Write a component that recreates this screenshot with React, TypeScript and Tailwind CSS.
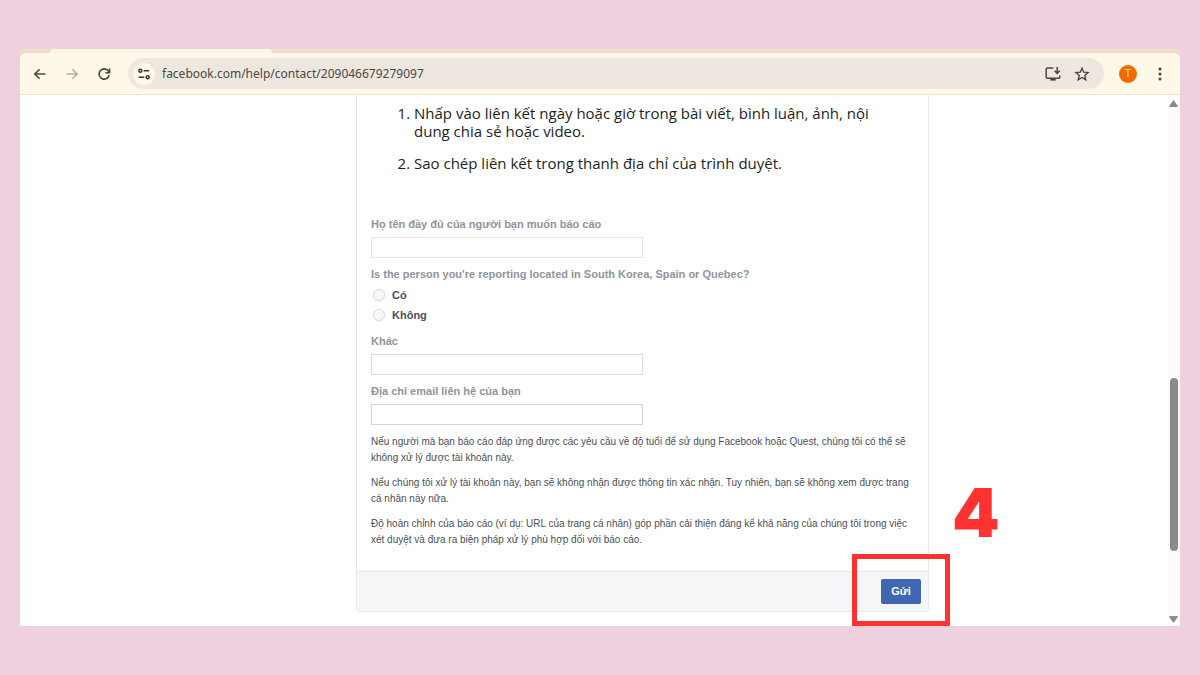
import type { ReactNode } from "react"

const InstallIcon = () => (
  <svg className="w-4 h-4" viewBox="0 0 16 16" fill="none" stroke="#4a463f" strokeWidth="1.5">
    <path d="M8.3 2H2.4C1.7 2 1.2 2.5 1.2 3.2V11c0 .7.5 1.2 1.2 1.2h11.2c.7 0 1.2-.5 1.2-1.2V9.6" />
    <path d="M12.2 1v6M9.6 4.8l2.6 2.6 2.6-2.6" />
    <path d="M5.3 13.6h5.4" strokeWidth="2" />
  </svg>
)

const TuneIcon = () => (
  <svg className="w-3 h-3" viewBox="0 0 12 12" fill="none" stroke="#3a372f" strokeWidth="1.5">
    <circle cx="2.3" cy="2.8" r="1.5" />
    <path d="M5.6 2.8h5.6M.6 9.2h5.6" />
    <circle cx="9.7" cy="9.2" r="1.5" />
  </svg>
)

const Toolbar = () => {
  return (
    <header>
      <div className="bg-[#ecdfc9] rounded-t-sm">
        <div className="h-1 w-[222px] ml-[30px] bg-[#fef6e6] rounded-t"></div>
        <div className="h-[42px] bg-[#fef8e8] border-b border-[#efe5cc] rounded-t-md flex items-center px-3">
          <button aria-label="Back" className="w-4 h-4 flex items-center justify-center">
            <svg className="w-4 h-4" viewBox="0 0 16 16" fill="none" stroke="#4b4a37" strokeWidth="1.6">
              <path d="M13.5 8H3M7.6 3.2L2.8 8l4.8 4.8" />
            </svg>
          </button>
          <button aria-label="Forward" className="w-4 h-4 ml-4 flex items-center justify-center">
            <svg className="w-4 h-4" viewBox="0 0 16 16" fill="none" stroke="#b3ae9d" strokeWidth="1.5">
              <path d="M2.5 8H13M8.4 3.2L13.2 8l-4.8 4.8" />
            </svg>
          </button>
          <button aria-label="Reload" className="w-4 h-4 ml-4 flex items-center justify-center">
            <svg className="w-4 h-4" viewBox="0 0 16 16" fill="none" stroke="#4b4a37" strokeWidth="1.6">
              <path d="M13.2 9A5.1 5.1 0 1 1 12 4.6L13.2 6.2" />
              <path d="M13.6 2.4v4.3H9.3" />
            </svg>
          </button>

          <div className="flex-1 ml-4 h-[31px] rounded-full bg-[#ede7df] flex items-center pl-[5px] pr-[14px]">
            <button
              aria-label="Site information"
              className="w-[22px] h-[22px] rounded-full bg-[#fef8ec] flex items-center justify-center"
            >
              <TuneIcon />
            </button>
            <input
              aria-label="Address"
              className="flex-1 min-w-0 ml-[7px] bg-transparent outline-none text-[12px] text-[#4c4842] font-['Noto_Sans',sans-serif]"
              defaultValue="facebook.com/help/contact/209046679279097"
            />
            <button aria-label="Install" className="mr-[13px]">
              <InstallIcon />
            </button>
            <button aria-label="Bookmark">
              <svg className="w-4 h-4" viewBox="0 0 16 16" fill="none" stroke="#4a463f" strokeWidth="1.4">
                <path d="M8 2.2l1.7 4 4.4.4-3.3 2.9 1 4.3L8 11.5l-3.8 2.3 1-4.3-3.3-2.9 4.4-.4z" />
              </svg>
            </button>
          </div>

          <button className="w-[18px] h-[18px] ml-[15px] rounded-full bg-[#ee6c02] text-[#fbd9bd] text-[10px] leading-none font-['Roboto',sans-serif]">
            T
          </button>
          <button aria-label="Menu" className="ml-[15px]">
            <svg className="w-4 h-4" viewBox="0 0 16 16" fill="#45433a">
              <circle cx="8" cy="3" r="1.5" />
              <circle cx="8" cy="8" r="1.5" />
              <circle cx="8" cy="13" r="1.5" />
            </svg>
          </button>
        </div>
      </div>
    </header>
  )
}

type FieldProps = {
  id: string
  label: string
  border: string
}

const Field = ({ id, label, border }: FieldProps) => (
  <div className="flex flex-col">
    <label htmlFor={id} className="text-[11px] leading-4 font-bold text-[#90949c]">
      {label}
    </label>
    <input
      id={id}
      type="text"
      className={`w-[272px] h-[21px] mt-[5px] px-1 text-[11px] bg-white border outline-none ${border}`}
    />
  </div>
)

const Choice = ({ children }: { children: ReactNode }) => (
  <label className="h-5 pl-[2px] flex items-center gap-[7px] text-[11px] font-bold text-[#4b4f56]">
    <input
      type="radio"
      name="location"
      className="appearance-none w-3 h-3 rounded-full bg-[#f8f8f8] border border-[#d9d9d9] shadow-xs"
    />
    {children}
  </label>
)

const ReportForm = () => {
  return (
    <form className="w-[573px] border-x border-b border-[#e9eaec] rounded-b-sm" onSubmit={(e) => e.preventDefault()}>
      <div className="pt-[9px] pb-[23px] px-[14px]">
        <ol className="list-decimal pl-[43px] flex flex-col gap-[14px] text-[15px] leading-[18px] text-[#1c1e21] font-['Open_Sans','Noto_Sans',sans-serif]">
          <li>
            Nhấp vào liên kết ngày hoặc giờ trong bài viết, bình luận, ảnh, nội
            <br />
            dung chia sẻ hoặc video.
          </li>
          <li>Sao chép liên kết trong thanh địa chỉ của trình duyệt.</li>
        </ol>

        <div className="mt-11 flex flex-col gap-2">
          <Field id="name" label="Họ tên đầy đủ của người bạn muốn báo cáo" border="border-[#e3e4e8]" />
          <fieldset>
            <legend className="mb-[3px] text-[11px] leading-4 font-bold text-[#90949c]">
              Is the person you're reporting located in South Korea, Spain or Quebec?
            </legend>
            <Choice>Có</Choice>
            <Choice>Không</Choice>
          </fieldset>
          <Field id="other" label="Khác" border="border-[#dcdcde]" />
          <Field id="email" label="Địa chỉ email liên hệ của bạn" border="border-[#d3d4d6]" />
        </div>

        <div className="mt-[9px] flex flex-col gap-[9px] text-[10px] leading-4 text-[#4b4f56]">
          <p>
            Nếu người mà bạn báo cáo đáp ứng được các yêu cầu về độ tuổi để sử dụng Facebook hoặc Quest, chúng tôi có thể sẽ
            <br />
            không xử lý được tài khoản này.
          </p>
          <p>
            Nếu chúng tôi xử lý tài khoản này, bạn sẽ không nhận được thông tin xác nhận. Tuy nhiên, bạn sẽ không xem được trang
            <br />
            cá nhân này nữa.
          </p>
          <p>
            Độ hoàn chỉnh của báo cáo (ví dụ: URL của trang cá nhân) góp phần cải thiện đáng kể khả năng của chúng tôi trong việc
            <br />
            xét duyệt và đưa ra biện pháp xử lý phù hợp đối với báo cáo.
          </p>
        </div>
      </div>

      <div className="h-[40px] px-[7px] bg-[#f5f6f7] border-t border-[#e5e6e9] flex items-center justify-end">
        <div className="relative">
          <button className="block w-10 h-[25px] rounded-xs bg-[#4267b2] text-white text-[11px] font-bold">Gửi</button>
          {/* step marker */}
          <div className="absolute -left-[29px] -top-[25px] w-[98px] h-[72px] border-5 border-[#ff3131] pointer-events-none"></div>
          <span className="absolute left-[71px] -top-[101px] text-[68px] leading-[68px] font-black text-[#ff3131] font-['Inter',sans-serif]">
            4
          </span>
        </div>
      </div>
    </form>
  )
}

const ScrollBar = () => (
  <div className="w-[13px] bg-[#fcfcfd] flex flex-col items-center pt-[5px] pb-[3px]">
    <svg className="w-[9px] h-[7px]" viewBox="0 0 9 7" fill="#8b8b8b">
      <path d="M4.5 0L9 6.2 8.4 7H.6L0 6.2z" />
    </svg>
    <div className="flex-[271]"></div>
    <div className="flex-[173] w-2 rounded-full bg-[#8b8b8b]"></div>
    <div className="flex-[65]"></div>
    <svg className="w-[9px] h-[7px]" viewBox="0 0 9 7" fill="#8b8b8b">
      <path d="M4.5 7L9 .8 8.4 0H.6L0 .8z" />
    </svg>
  </div>
)

export default function App() {
  return (
    <div className="min-h-screen px-5 py-[49px] bg-[#eed0df] flex flex-col font-['Liberation_Sans',Arial,sans-serif]">
      <Toolbar />
      <div className="flex-1 bg-white flex">
        <main className="flex-1 flex justify-center items-start pl-[98px] pb-[14px]">
          <ReportForm />
        </main>
        <ScrollBar />
      </div>
    </div>
  )
}
